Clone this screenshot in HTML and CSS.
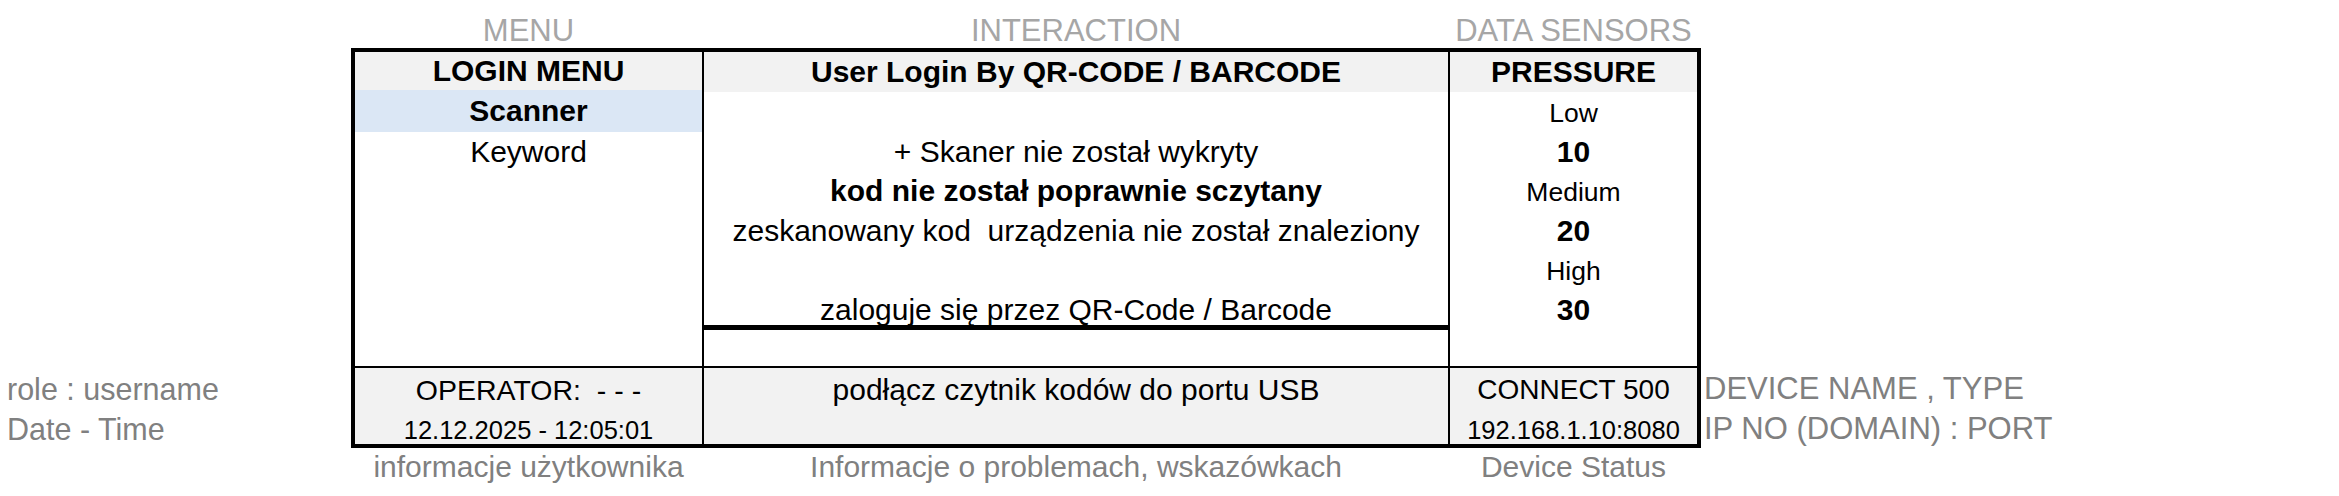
FILE: index.html
```html
<!DOCTYPE html>
<html lang="pl">
<head>
<meta charset="utf-8">
<title>Login Menu</title>
<link rel="stylesheet" href="styles.css">
</head>
<body>
<div class="page">
  <div class="corner"></div>
  <div class="labels labels-top">
    <span class="lab lab-c1">MENU</span>
    <span class="lab lab-c2">INTERACTION</span>
    <span class="lab lab-c3">DATA SENSORS</span>
  </div>
  <div class="corner"></div>

  <div class="side side-left">
    <div class="side-row">role : username</div>
    <div class="side-row side-row-2">Date - Time</div>
  </div>

  <div class="panel">
    <div class="col col-menu">
      <div class="head head-short">LOGIN MENU</div>
      <div class="row row-selected">Scanner</div>
      <div class="row">Keyword</div>
      <div class="spacer"></div>
      <div class="foot">
        <div class="foot-row foot-op">OPERATOR:&nbsp; - - -</div>
        <div class="foot-row foot-row-2 small">12.12.2025 - 12:05:01</div>
      </div>
    </div>

    <div class="col col-inter">
      <div class="head">User Login By QR-CODE / BARCODE</div>
      <div class="row"></div>
      <div class="row">+ Skaner nie został wykryty</div>
      <div class="row bold">kod nie został poprawnie sczytany</div>
      <div class="row">zeskanowany kod &nbsp;urządzenia nie został znaleziony</div>
      <div class="row"></div>
      <div class="row row-underlined">zaloguje się przez QR-Code / Barcode</div>
      <div class="spacer"></div>
      <div class="foot">
        <div class="foot-row">podłącz czytnik kodów do portu USB</div>
        <div class="foot-row foot-row-2"></div>
      </div>
    </div>

    <div class="col col-sensor">
      <div class="head">PRESSURE</div>
      <div class="row level">Low</div>
      <div class="row bold">10</div>
      <div class="row level">Medium</div>
      <div class="row bold">20</div>
      <div class="row level">High</div>
      <div class="row bold">30</div>
      <div class="spacer"></div>
      <div class="foot">
        <div class="foot-row foot-dev">CONNECT 500</div>
        <div class="foot-row foot-row-2 small">192.168.1.10:8080</div>
      </div>
    </div>
  </div>

  <div class="side side-right">
    <div class="side-row">DEVICE NAME , TYPE</div>
    <div class="side-row side-row-2">IP NO (DOMAIN) : PORT</div>
  </div>

  <div class="corner"></div>
  <div class="labels labels-bottom">
    <span class="lab lab-c1">informacje użytkownika</span>
    <span class="lab lab-c2">Informacje o problemach, wskazówkach</span>
    <span class="lab lab-c3">Device Status</span>
  </div>
  <div class="corner"></div>
</div>
</body>
</html>
```

FILE: styles.css
```css
* {
  box-sizing: border-box;
}

html, body {
  margin: 0;
  padding: 0;
  background: #ffffff;
}

body {
  font-family: "Liberation Sans", Arial, sans-serif;
  font-size: 30px;
  color: #000000;
  width: 2339px;
  height: 496px;
  overflow: hidden;
}

.page {
  display: grid;
  grid-template-columns: 351px 1350px 1fr;
  grid-template-rows: 48px 400px 48px;
}

/* ---------- outer labels ---------- */
.labels {
  display: grid;
  grid-template-columns: 4px 347px 2px 744px 2px 247px 4px;
  white-space: nowrap;
}

.lab {
  text-align: center;
  overflow: visible;
}

.lab-c1 { grid-column: 2; }
.lab-c2 { grid-column: 4; }
.lab-c3 { grid-column: 6; }

.labels-top {
  color: #a6a6a6;
  font-size: 31px;
  padding-top: 14px;
  line-height: 34px;
}

.labels-bottom {
  color: #808080;
  line-height: 38px;
}

.labels-top .lab-c3 {
  margin: 0 -40px;
}

.side {
  display: flex;
  flex-direction: column;
  justify-content: flex-end;
  padding-bottom: 4px;
  color: #808080;
  white-space: nowrap;
}

.side-left {
  padding-left: 7px;
  font-size: 30.5px;
}

.side-right {
  padding-left: 3px;
  font-size: 31px;
}

.side-row {
  height: 38px;
  line-height: 38px;
  padding-top: 2px;
}

.side-row-2 {
  padding-top: 4px;
}

/* ---------- panel ---------- */
.panel {
  display: flex;
  border: 4px solid #000000;
  height: 400px;
}

.col {
  display: flex;
  flex-direction: column;
  text-align: center;
  white-space: nowrap;
}

.col-menu {
  width: 349px;
  border-right: 2px solid #000000;
}

.col-inter {
  width: 746px;
  border-right: 2px solid #000000;
}

.col-sensor {
  width: 247px;
}

.head {
  height: 40px;
  line-height: 40px;
  background: #f2f2f2;
  font-weight: bold;
}

.head-short {
  height: 38px;
  line-height: 38px;
}

.row {
  height: 39.5px;
  line-height: 39.5px;
  flex: none;
}

.row-selected {
  height: 41.5px;
  line-height: 41.5px;
  background: #dbe7f5;
  font-weight: bold;
}

.row-underlined {
  height: 40.5px;
  line-height: 39.5px;
  border-bottom: 5px solid #000000;
}

.bold {
  font-weight: bold;
}

.level {
  font-size: 26.5px;
  padding-top: 2px;
}

.spacer {
  flex: 1;
}

.foot {
  border-top: 2px solid #000000;
  background: #f2f2f2;
  height: 78px;
  flex: none;
}

.foot-row {
  height: 38px;
  line-height: 38px;
  padding-top: 3px;
}

.foot-row-2 {
  padding-top: 5px;
}

.foot-op {
  font-size: 28.5px;
}

.foot-dev {
  font-size: 28px;
}

.small {
  font-size: 25.5px;
}
```
